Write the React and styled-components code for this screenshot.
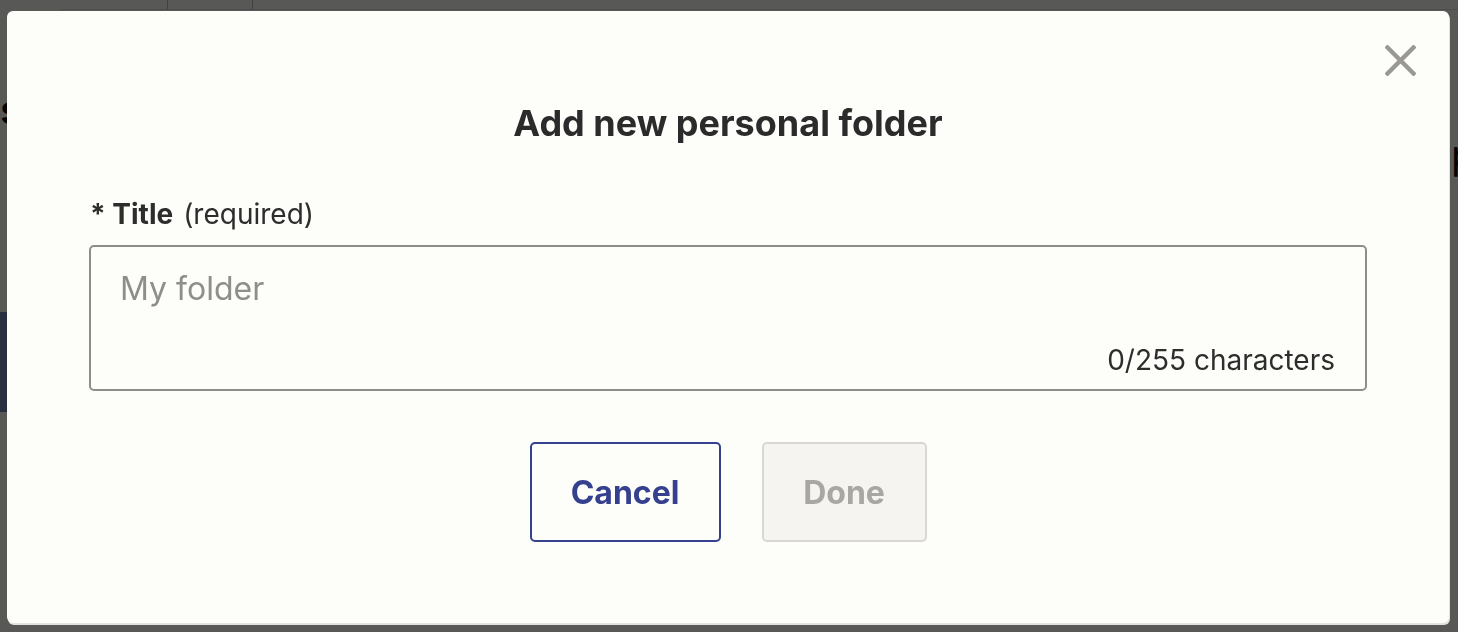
import React from "react";
import styled, { createGlobalStyle } from "styled-components";

const Global = createGlobalStyle`
  html, body { margin: 0; padding: 0; }
  body {
    background: #fdfdf9;
    font-family: Inter, "Noto Sans", "Liberation Sans", sans-serif;
    color: #2d2d2d;
    overflow: hidden;
  }
  * { box-sizing: border-box; }
`;

const Page = styled.div`
  width: 1458px;
  height: 632px;
  display: grid;
  grid-template-columns: 60px 1fr;
  background: #fdfdf9;
  overflow: hidden;
`;

const Sidebar = styled.div`
  display: flex;
  flex-direction: column;
  padding-top: 90px;
  gap: 20px;
`;

const SideItem = styled.div`
  height: ${(p) => (p.$tall ? "100px" : "40px")};
  background: ${(p) => (p.$active ? "#7a88b8" : "transparent")};
  color: #111;
  font-size: 40px;
  font-weight: 600;
  line-height: 40px;
  margin-top: ${(p) => p.$mt || 0}px;
`;

const Main = styled.div`
  display: flex;
  flex-direction: column;
  min-width: 0;
`;

const TopBar = styled.div`
  height: 10px;
  display: flex;
  border-bottom: 1px solid #ddd;
`;

const TopCell = styled.div`
  width: ${(p) => p.$w}px;
  border-right: 1px solid #bbb;
`;

const EdgeText = styled.div`
  margin: 120px 0 0 1391px;
  font-size: 40px;
  line-height: 50px;
  color: #111;
  white-space: nowrap;
`;

const Overlay = styled.div`
  position: fixed;
  inset: 0;
  background: rgba(0, 0, 0, 0.65);
  display: flex;
  align-items: flex-start;
  padding: 11px 9px 9px 7px;
`;

const Modal = styled.div`
  position: relative;
  width: 1442px;
  height: 612px;
  background: #fdfdf9;
  border-radius: 6px;
  box-shadow: 1px 2px 0 #e4e2dc;
  padding: 90px 82px 0 82px;
  display: flex;
  flex-direction: column;
`;

const Close = styled.button`
  position: absolute;
  top: 30px;
  right: 30px;
  width: 38px;
  height: 38px;
  border: none;
  background: transparent;
  padding: 0;
  display: flex;
  align-items: center;
  justify-content: center;
  cursor: pointer;
`;

const Title = styled.h2`
  margin: 0;
  text-align: center;
  font-size: 36px;
  line-height: 44px;
  font-weight: 700;
  color: #2b2b2b;
`;

const Label = styled.div`
  margin-top: 52px;
  display: flex;
  align-items: baseline;
  gap: 10px;
  font-size: 28px;
  line-height: 34px;
  color: #2d2d2d;
  padding-left: 1px;
`;

const LabelStrong = styled.span`
  font-weight: 700;
`;

const Field = styled.div`
  margin-top: 14px;
  height: 146px;
  border: 2px solid #8e8d8a;
  border-radius: 5px;
  display: flex;
  flex-direction: column;
  justify-content: space-between;
  padding: 22px 30px 12px 29px;
`;

const Input = styled.input`
  border: none;
  outline: none;
  background: transparent;
  font-family: inherit;
  font-size: 32px;
  line-height: 40px;
  height: 40px;
  padding: 0;
  color: #2d2d2d;
  &::placeholder { color: #8f8e8a; }
`;

const Counter = styled.div`
  text-align: right;
  font-size: 28px;
  line-height: 34px;
  color: #2d2d2d;
`;

const Actions = styled.div`
  margin-top: 51px;
  display: flex;
  justify-content: center;
  gap: 41px;
`;

const Button = styled.button`
  height: 100px;
  width: ${(p) => p.$w}px;
  border-radius: 5px;
  font-family: inherit;
  font-size: 32px;
  font-weight: 700;
  border: 2px solid ${(p) => (p.$disabled ? "#d8d7d3" : "#35408f")};
  background: ${(p) => (p.$disabled ? "#f5f4f1" : "#fdfdf9")};
  color: ${(p) => (p.$disabled ? "#a8a7a3" : "#35408f")};
  cursor: ${(p) => (p.$disabled ? "default" : "pointer")};
`;

export default function App() {
  return (
    <>
      <Global />
      <Page>
        <Sidebar>
          <SideItem>s</SideItem>
          <SideItem $active $tall $mt={162} />
        </Sidebar>
        <Main>
          <TopBar>
            <TopCell $w={108} />
            <TopCell $w={85} />
          </TopBar>
          <EdgeText>pages</EdgeText>
        </Main>
      </Page>
      <Overlay>
        <Modal role="dialog" aria-modal="true">
          <Close aria-label="Close">
            <svg width="31" height="31" viewBox="0 0 31 31">
              <path d="M2.5 2.5 L28.5 28.5 M28.5 2.5 L2.5 28.5" stroke="#9a9893" strokeWidth="4.4" strokeLinecap="square" />
            </svg>
          </Close>
          <Title>Add new personal folder</Title>
          <Label>
            <LabelStrong>* Title</LabelStrong>
            <span>(required)</span>
          </Label>
          <Field>
            <Input placeholder="My folder" />
            <Counter>0/255 characters</Counter>
          </Field>
          <Actions>
            <Button $w={191}>Cancel</Button>
            <Button $w={165} $disabled disabled>Done</Button>
          </Actions>
        </Modal>
      </Overlay>
    </>
  );
}
